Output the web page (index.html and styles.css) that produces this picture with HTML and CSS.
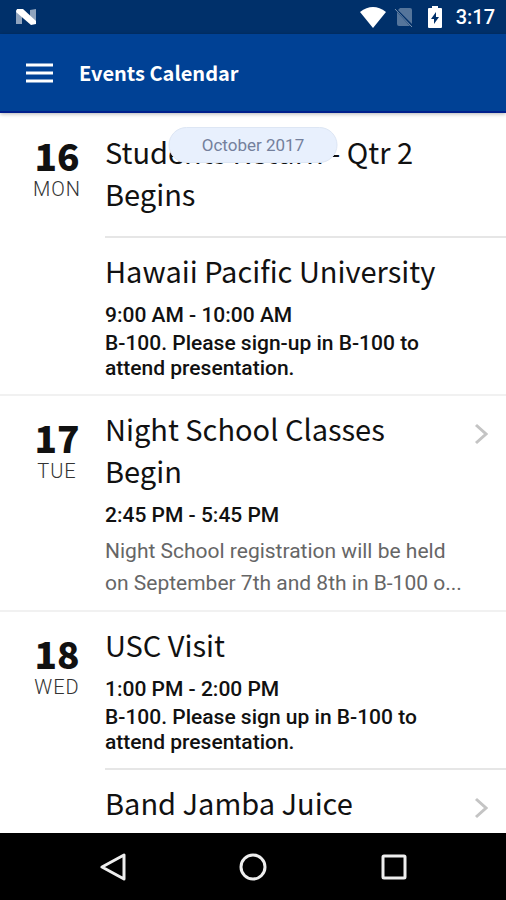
FILE: index.html
```html
<!DOCTYPE html>
<html lang="en">
<head>
    <meta charset="UTF-8">
    <meta name="viewport" content="width=device-width, initial-scale=1.0">
    <title>Events Calendar</title>
    <link rel="stylesheet" href="styles.css">
</head>
<body>
    <div class="status-bar">
        <svg class="logo" width="22" height="18" viewBox="0 0 22 18">
            <path d="M1 2l6-1v15H1zM15 2l6-1v15l-6-1z" fill="#8fa3bd"/>
            <path d="M2 1h6l13 12v3l-5 1L1 4z" fill="#fff"/>
        </svg>
        <div class="status-icons">
            <svg width="26" height="21" viewBox="0 0 26 21">
                <path d="M0 5Q13-5 26 5L13 21z" fill="#fff"/>
            </svg>
            <svg width="20" height="21" viewBox="0 0 20 21">
                <path d="M6 1h10q2 0 2 2v14L4 3zM3 5l13 14H5q-2 0-2-2z" fill="#55759b"/>
                <path d="M1 2l17 18" stroke="#7a93b0" stroke-width="1"/>
            </svg>
            <svg class="battery" width="14" height="22" viewBox="0 0 14 22">
                <path d="M4 0h6v2h3q1 0 1 1v18q0 1-1 1H1q-1 0-1-1V3q0-1 1-1h3z" fill="#fff"/>
                <path d="M8 6v5h3l-5 7v-5H3z" fill="#00306a"/>
            </svg>
            <span class="clock">3:17</span>
        </div>
    </div>

    <header class="app-bar">
        <button type="button" class="menu-button" aria-label="Menu">
            <svg width="27" height="20" viewBox="0 0 27 20">
                <path d="M0 2h27M0 10h27M0 18h27" stroke="#fff" stroke-width="3"/>
            </svg>
        </button>
        <h1>Events Calendar</h1>
    </header>

    <main class="calendar">
        <div class="month">October 2017</div>

        <section class="day day-current">
            <div class="date">
                <span class="number">16</span>
                <span class="weekday">MON</span>
            </div>
            <div class="events">
                <article class="event event-all-day">
                    <div class="event-text">
                        <h2>Students Return - Qtr 2 Begins</h2>
                    </div>
                </article>
                <article class="event">
                    <div class="event-text">
                        <h2>Hawaii Pacific University</h2>
                        <p class="time">9:00 AM - 10:00 AM</p>
                        <p class="location">B-100. Please sign-up in B-100 to attend presentation.</p>
                    </div>
                </article>
            </div>
        </section>

        <section class="day">
            <div class="date">
                <span class="number">17</span>
                <span class="weekday">TUE</span>
            </div>
            <div class="events">
                <article class="event">
                    <div class="event-text">
                        <h2>Night School Classes Begin</h2>
                        <p class="time">2:45 PM - 5:45 PM</p>
                        <p class="description">Night School registration will be held on September 7th and 8th in B-100 o...</p>
                    </div>
                    <svg class="arrow" width="14" height="22" viewBox="0 0 14 22">
                        <path d="M2 2l10 9-10 9" fill="none" stroke="#c4c4c4" stroke-width="3"/>
                    </svg>
                </article>
            </div>
        </section>

        <section class="day">
            <div class="date">
                <span class="number">18</span>
                <span class="weekday">WED</span>
            </div>
            <div class="events">
                <article class="event">
                    <div class="event-text">
                        <h2>USC Visit</h2>
                        <p class="time">1:00 PM - 2:00 PM</p>
                        <p class="location">B-100. Please sign up in B-100 to attend presentation.</p>
                    </div>
                </article>
                <article class="event">
                    <div class="event-text">
                        <h2>Band Jamba Juice</h2>
                    </div>
                    <svg class="arrow" width="14" height="22" viewBox="0 0 14 22">
                        <path d="M2 2l10 9-10 9" fill="none" stroke="#c4c4c4" stroke-width="3"/>
                    </svg>
                </article>
            </div>
        </section>
    </main>

    <nav class="nav-bar">
        <button type="button" aria-label="Back">
            <svg width="28" height="28" viewBox="0 0 28 28">
                <path d="M25 2v24L3 14z" fill="none" stroke="#eee" stroke-width="3" stroke-linejoin="round"/>
            </svg>
        </button>
        <button type="button" aria-label="Home">
            <svg width="28" height="28" viewBox="0 0 28 28">
                <circle cx="14" cy="14" r="12" fill="none" stroke="#eee" stroke-width="3"/>
            </svg>
        </button>
        <button type="button" aria-label="Recent apps">
            <svg width="28" height="28" viewBox="0 0 28 28">
                <rect x="4" y="3" width="22" height="22" rx="1" fill="none" stroke="#eee" stroke-width="3"/>
            </svg>
        </button>
    </nav>
</body>
</html>
```
FILE: styles.css
```css
body {
    display: flex;
    flex-direction: column;
    height: 100vh;
    margin: 0;
    font-family: Roboto, sans-serif;
    color: #111;
    background-color: #fff;
}

h1,
h2,
p {
    margin: 0;
}

button {
    display: flex;
    padding: 0;
    border: none;
    background: none;
    cursor: pointer;
}

/* Top bars */
.status-bar {
    display: flex;
    flex-shrink: 0;
    align-items: center;
    justify-content: space-between;
    height: 34px;
    padding: 0 11px 0 15px;
    background-color: #00306a;
}

.status-icons {
    display: flex;
    align-items: center;
    gap: 8px;
}

.battery {
    margin-left: 6px;
}

.clock {
    margin-left: 6px;
    font-size: 20px;
    font-weight: 500;
    color: #fff;
}

.app-bar {
    display: flex;
    flex-shrink: 0;
    align-items: center;
    gap: 26px;
    height: 77px;
    padding: 0 26px;
    border-bottom: 2px solid #001f8c;
    background-color: #004195;
    box-shadow: 0 1px 4px rgba(0, 0, 0, 0.3);
    z-index: 1;
}

h1 {
    font-family: "Noto Sans CJK JP", sans-serif;
    font-size: 20px;
    font-weight: bold;
    line-height: 30px;
    color: #fff;
}

/* Event list */
.calendar {
    position: relative;
    flex: 1;
    min-height: 0;
    padding-top: 6px;
    overflow: hidden;
}

.month {
    position: absolute;
    top: 14px;
    left: 50%;
    transform: translateX(-50%);
    box-sizing: border-box;
    width: 169px;
    border: 1px solid #dde6f4;
    border-radius: 18px;
    font-size: 17px;
    line-height: 34px;
    text-align: center;
    color: #74809c;
    background-color: #e8f0fd;
}

.day {
    display: flex;
    border-bottom: 2px solid #f1f1f1;
}

.date {
    display: flex;
    flex-direction: column;
    flex-shrink: 0;
    align-items: center;
    box-sizing: border-box;
    width: 105px;
    padding: 23px 15px 0 24px;
}

.day-current .date {
    padding-top: 18px;
}

.number {
    font-family: "Noto Sans CJK JP", sans-serif;
    font-size: 37px;
    font-weight: 900;
    line-height: 36px;
}

.weekday {
    margin-top: 3px;
    font-size: 20px;
    font-weight: 300;
    line-height: 26px;
    letter-spacing: 1px;
    color: #333;
}

.events {
    flex: 1;
    min-width: 0;
}

.event {
    display: flex;
    padding: 11px 18px 11px 0;
}

.event + .event {
    border-top: 2px solid #e6e6e6;
}

.event-all-day {
    padding-bottom: 22px;
}

.event-text {
    flex: 1;
    min-width: 0;
    margin-right: 12px;
}

.event .arrow {
    margin-top: 16px;
}

h2 {
    font-family: "Noto Sans CJK JP", sans-serif;
    font-size: 29px;
    font-weight: 400;
    line-height: 42px;
}

.time {
    margin-top: 11px;
    font-size: 21px;
    font-weight: 500;
    line-height: 26px;
}

.location {
    margin: 3px 0 2px;
    font-size: 21px;
    font-weight: 500;
    line-height: 25px;
}

.description {
    margin-top: 7px;
    font-size: 21px;
    line-height: 32px;
    color: #666;
}

/* Android navigation */
.nav-bar {
    display: flex;
    flex-shrink: 0;
    align-items: center;
    justify-content: center;
    gap: 112px;
    height: 67px;
    background-color: #000;
}
```
